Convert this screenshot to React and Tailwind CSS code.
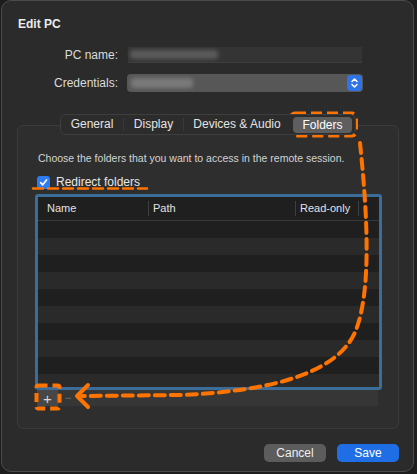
import React from "react";

const font = { fontFamily: '"Liberation Sans", Arial, sans-serif' };

function Check() {
  return (
    <svg width="9" height="9" viewBox="0 0 10 10">
      <path d="M1.8 5.2 L4.1 7.6 L8.4 2.2" fill="none" stroke="white" strokeWidth="1.8" strokeLinecap="round" strokeLinejoin="round" />
    </svg>
  );
}

function Stepper() {
  return (
    <div className="flex h-[16px] w-[15px] items-center justify-center rounded-[4px] bg-[#2f74e6]">
      <svg width="9" height="12" viewBox="0 0 9 12">
        <path d="M2 4.5 L4.5 2 L7 4.5 M2 7.5 L4.5 10 L7 7.5" fill="none" stroke="white" strokeWidth="1.5" strokeLinecap="round" strokeLinejoin="round" />
      </svg>
    </div>
  );
}

function Overlay() {
  const o = "#ff7400";
  return (
    <svg className="pointer-events-none absolute left-0 top-0" width="417" height="474" viewBox="0 0 417 474">
      <rect x="291" y="113.5" width="65" height="22" rx="4" fill="none" stroke={o} strokeWidth="4" strokeDasharray="11 5" />
      <path d="M33 188.5 L147 188.5" fill="none" stroke={o} strokeWidth="2.5" strokeDasharray="10 5" strokeLinecap="round" />
      <path d="M360 143 C368 220, 371 290, 356 330 C340 370, 280 391, 180 395 L82 396" fill="none" stroke={o} strokeWidth="4" strokeDasharray="10 6" strokeLinecap="round" />
      <path d="M88 385 L77 396 L88 407" fill="none" stroke={o} strokeWidth="4" strokeLinecap="round" strokeLinejoin="round" />
      <rect x="36.5" y="385.5" width="23" height="23" rx="2" fill="none" stroke={o} strokeWidth="4" strokeDasharray="9 5" />
    </svg>
  );
}

export default function App() {
  const rows = Array.from({ length: 10 });
  return (
    <div className="relative h-[474px] w-[417px] overflow-hidden bg-[#1d1d1d]" style={font}>
      <div className="ml-px flex h-[472px] w-[413px] flex-col rounded-[10px] border border-[#4b4b4b] bg-[#2b2b2b] pl-[15px] pr-[14px]">
        <div className="ml-px pt-[15px] text-[12px] font-bold leading-4 text-[#ececec]">Edit PC</div>

        <div className="mt-[15px] flex items-center">
          <div className="w-[101px] text-right text-[12px] leading-4 text-[#dcdcdc]">PC name:</div>
          <div className="ml-[10px] flex h-[16px] w-[234px] items-center border-b border-[#3e3e3e] bg-[#343434]">
            <div className="ml-[2px] h-[9px] w-[88px] rounded-[3px] bg-[#5b5b5b] blur-[2px]" />
          </div>
        </div>

        <div className="mt-[11px] flex items-center">
          <div className="w-[101px] text-right text-[12px] leading-4 text-[#dcdcdc]">Credentials:</div>
          <div className="ml-[9px] flex h-[18px] w-[236px] items-center justify-between rounded-[4px] bg-[#575757] pr-[1px]">
            <div className="ml-[4px] h-[10px] w-[62px] rounded-[3px] bg-[#7a7a7a] blur-[2px]" />
            <Stepper />
          </div>
        </div>

        <div className="mt-[22px] flex flex-col items-center">
          <div className="relative z-10 -mb-[10px] flex h-[21px] w-[296px] items-center rounded-[6px] border border-[#3e3e3e] bg-[#2c2c2c] text-[12px] text-[#e4e4e4]">
            <div className="flex w-[63px] justify-center border-r border-[#393939] leading-[13px]">General</div>
            <div className="flex w-[60px] justify-center border-r border-[#393939] leading-[13px]">Display</div>
            <div className="flex w-[106px] justify-center leading-[13px]">Devices &amp; Audio</div>
            <div className="flex w-[65px] justify-center px-[3px]">
              <div className="flex h-[16px] w-full items-center justify-center rounded-[4px] bg-[#5e5e5e] text-white">Folders</div>
            </div>
          </div>

          <div className="flex h-[304px] w-[382px] flex-col rounded-[6px] border border-[#3b3b3b] bg-[#2e2e2e] px-[17px]">
            <div className="ml-[3px] mt-[25px] text-[10.5px] leading-[14px] text-[#d4d4d4]">
              Choose the folders that you want to access in the remote session.
            </div>

            <div className="ml-[2px] mt-[10px] flex items-center">
              <div className="flex h-[13px] w-[13px] items-center justify-center rounded-[3px] bg-[#2f7bf3]">
                <Check />
              </div>
              <div className="ml-[6px] text-[12px] leading-[14px] text-[#e8e8e8]">Redirect folders</div>
            </div>

            <div className="mt-[5px] flex h-[196px] w-[347px] flex-col overflow-hidden rounded-[3px] border-[3px] border-[#3c6d99] bg-[#1f1f1f]">
              <div className="flex h-[24px] shrink-0 items-center border-b border-[#393939] text-[11px] font-medium text-[#e2e2e2]">
                <div className="w-[110px] pl-[9px]">Name</div>
                <div className="flex w-[147px] items-center">
                  <div className="h-[15px] w-px bg-[#3f3f3f]" />
                  <div className="pl-[4px]">Path</div>
                </div>
                <div className="flex w-[63px] items-center">
                  <div className="h-[15px] w-px bg-[#3f3f3f]" />
                  <div className="pl-[4px]">Read-only</div>
                </div>
                <div className="h-[15px] w-px bg-[#3f3f3f]" />
              </div>
              <div className="flex flex-1 flex-col overflow-hidden">
                {rows.map((_, i) => (
                  <div key={i} className={i % 2 === 0 ? "h-[17px] shrink-0 bg-[#1f1f1f]" : "h-[17px] shrink-0 bg-[#2a2a2a]"} />
                ))}
              </div>
            </div>

            <div className="ml-[2px] flex h-[16px] w-[341px] items-center bg-[#363636]">
              <div className="flex h-[16px] w-[21px] items-center justify-center bg-[#474747] text-[15px] font-light leading-none text-[#d8d8d8]">+</div>
              <div className="flex h-[16px] w-[20px] items-center justify-center text-[12px] leading-none text-[#6a6a6a]">−</div>
            </div>
          </div>
        </div>

        <div className="mt-[15px] flex justify-end gap-[11px]">
          <div className="flex h-[18px] w-[62px] items-center justify-center rounded-[5px] bg-[#5c5c5c] text-[12px] text-[#eeeeee]">Cancel</div>
          <div className="flex h-[18px] w-[62px] items-center justify-center rounded-[5px] bg-[#1f6ee6] text-[12px] text-white">Save</div>
        </div>
      </div>
      <Overlay />
    </div>
  );
}
